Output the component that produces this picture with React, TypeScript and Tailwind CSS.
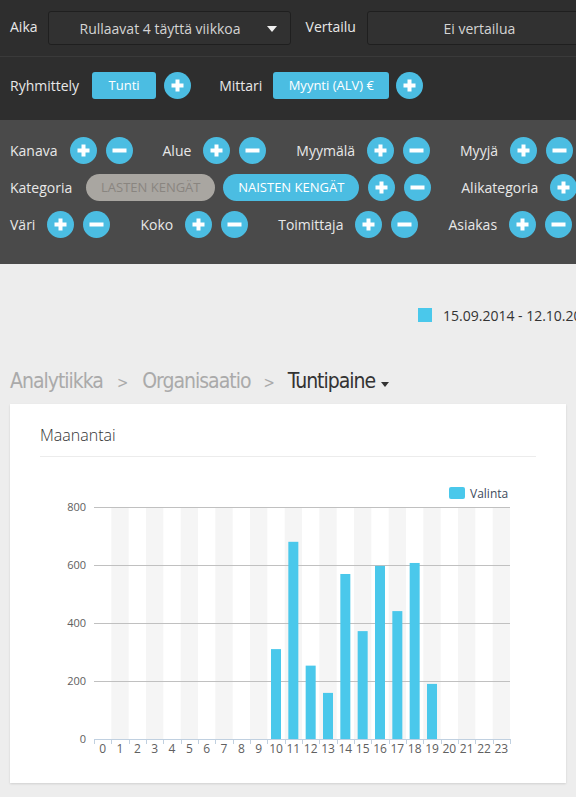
import React from 'react';

const BLUE = '#4bbde2';

const VALUES: Record<number, number> = {
  10: 310, 11: 680, 12: 253, 13: 159, 14: 569, 15: 372, 16: 597, 17: 441, 18: 607, 19: 190,
};

function RoundBtn({ kind }: { kind: 'plus' | 'minus' }) {
  return (
    <svg width="27" height="27" viewBox="0 0 27 27" className="shrink-0">
      <circle cx="13.5" cy="13.5" r="13.5" fill={BLUE} />
      {kind === 'plus' ? (
        <>
          <rect x="7.5" y="11.5" width="12" height="4" fill="#fff" />
          <rect x="11.5" y="7.5" width="4" height="12" fill="#fff" />
        </>
      ) : (
        <rect x="6.5" y="11.5" width="14" height="4" fill="#fff" />
      )}
    </svg>
  );
}

function Filter({ label, children }: { label: string; children?: React.ReactNode }) {
  return (
    <div className="flex items-center shrink-0 mr-[30px]">
      <span className="text-[14px] text-[#e8e8e8] mr-[12px]">{label}</span>
      <div className="flex items-center gap-[9px]">
        {children ?? (
          <>
            <RoundBtn kind="plus" />
            <RoundBtn kind="minus" />
          </>
        )}
      </div>
    </div>
  );
}

function Select({ value, caret }: { value: string; caret?: boolean }) {
  return (
    <div className="relative w-[243px] h-[34px] shrink-0 rounded-[3px] border border-[#1f1f1f] bg-[#313131] flex items-center justify-center pr-[18px]">
      <span className="text-[14px] text-[#d4d4d4]">{value}</span>
      {caret && (
        <svg width="10" height="6" viewBox="0 0 10 6" className="absolute right-[13px] top-[14px]">
          <path d="M0 0 L10 0 L5 6 Z" fill="#f0f0f0" />
        </svg>
      )}
    </div>
  );
}

function Chart() {
  const left = 54;
  const right = 470;
  const top = 42;
  const bottom = 274;
  const cw = (right - left) / 24;
  const scale = (bottom - top) / 800;
  const cats = Array.from({ length: 24 }, (_, i) => i);
  return (
    <svg width="496" height="300" viewBox="0 0 496 300" style={{ fontFamily: '"Open Sans", sans-serif' }}>
      {cats.filter((i) => i % 2 === 1).map((i) => (
        <rect key={'b' + i} x={left + i * cw} y={top} width={cw} height={bottom - top} fill="#f5f5f5" />
      ))}
      {[800, 600, 400, 200].map((v) => {
        const y = bottom - v * scale;
        return <line key={v} x1={left} x2={right} y1={y + 0.5} y2={y + 0.5} stroke="#c0c0c0" strokeWidth="1" />;
      })}
      {[800, 600, 400, 200, 0].map((v) => (
        <text key={'l' + v} x="46" y={bottom - v * scale + 4} textAnchor="end" fontSize="11" fill="#606060">
          {v}
        </text>
      ))}
      {cats.map((i) =>
        VALUES[i] ? (
          <rect
            key={'v' + i}
            x={left + i * cw + cw / 2 - 5}
            y={bottom - VALUES[i] * scale}
            width="10"
            height={VALUES[i] * scale}
            fill="#4ac8eb"
          />
        ) : null
      )}
      <line x1={left} x2={right} y1={bottom + 0.5} y2={bottom + 0.5} stroke="#c0d0e0" />
      {Array.from({ length: 25 }, (_, i) => (
        <line key={'t' + i} x1={Math.round(left + i * cw) + 0.5} x2={Math.round(left + i * cw) + 0.5} y1={bottom} y2={bottom + 5} stroke="#c0d0e0" />
      ))}
      {cats.map((i) => (
        <text key={'x' + i} x={left + i * cw + cw / 2} y="288" textAnchor="middle" fontSize="12" fill="#606060">
          {i}
        </text>
      ))}
      <rect x="409" y="22" width="16" height="12" rx="2" fill="#4ac8eb" />
      <text x="430" y="33" fontSize="12" fill="#3e4a5c">Valinta</text>
    </svg>
  );
}

export default function App() {
  return (
    <div className="w-[576px] min-h-[797px] bg-[#ededed] overflow-hidden" style={{ fontFamily: '"Open Sans", sans-serif' }}>
      <div className="bg-[#2e2e2e]">
        <div className="flex items-center h-[57px] pl-[10px] border-b border-[#3a3a3a]">
          <span className="text-[14px] text-[#e8e8e8] mr-[10px] -mt-[4px]">Aika</span>
          <Select value="Rullaavat 4 täyttä viikkoa" caret />
          <span className="text-[14px] text-[#e8e8e8] ml-[15px] mr-[11px] -mt-[4px]">Vertailu</span>
          <Select value="Ei vertailua" />
        </div>
        <div className="flex items-center h-[63px] pl-[10px] pb-[6px]">
          <span className="text-[14px] text-[#e8e8e8] mr-[13px]">Ryhmittely</span>
          <div className="w-[64px] h-[27px] rounded-[3px] bg-[#4bbde2] flex items-center justify-center text-[13px] text-white">Tunti</div>
          <div className="ml-[8px]"><RoundBtn kind="plus" /></div>
          <span className="text-[14px] text-[#e8e8e8] ml-[28px] mr-[11px]">Mittari</span>
          <div className="w-[116px] h-[27px] rounded-[3px] bg-[#4bbde2] flex items-center justify-center text-[13px] text-white">Myynti (ALV) €</div>
          <div className="ml-[7px]"><RoundBtn kind="plus" /></div>
        </div>
      </div>

      <div className="bg-[#4a4a4a] pt-[17px] pb-[26px] pl-[10px] flex flex-col gap-[10px] overflow-hidden whitespace-nowrap">
        <div className="flex items-center h-[27px]">
          <Filter label="Kanava" />
          <Filter label="Alue" />
          <Filter label="Myymälä" />
          <Filter label="Myyjä" />
        </div>
        <div className="flex items-center h-[27px]">
          <Filter label="Kategoria">
            <div className="w-[129px] h-[27px] rounded-full bg-[#a9a6a1] flex items-center justify-center text-[13px] text-[#898580] ml-[2px]">LASTEN KENGÄT</div>
            <div className="w-[136px] h-[27px] rounded-full bg-[#4bbde2] flex items-center justify-center text-[13px] text-white -ml-[1px]">NAISTEN KENGÄT</div>
            <RoundBtn kind="plus" />
            <RoundBtn kind="minus" />
          </Filter>
          <Filter label="Alikategoria" />
        </div>
        <div className="flex items-center h-[27px]">
          <Filter label="Väri" />
          <Filter label="Koko" />
          <Filter label="Toimittaja" />
          <Filter label="Asiakas" />
        </div>
      </div>

      <div className="pt-[44px] whitespace-nowrap overflow-hidden">
        <div className="flex items-center ml-[418px] h-[14px]">
          <span className="w-[14px] h-[14px] bg-[#4ac8eb] shrink-0" />
          <span className="ml-[11px] text-[14px] text-[#333]">15.09.2014 - 12.10.2014</span>
        </div>
      </div>

      <div className="flex items-baseline pl-[10px] mt-[44px] h-[32px]" style={{ fontFamily: '"DejaVu Sans Condensed", "DejaVu Sans", sans-serif', fontStretch: 'condensed' }}>
        <span className="text-[21px] text-[#aaaaaa] tracking-[-1px]">Analytiikka</span>
        <span className="text-[15px] text-[#aaaaaa] mx-[14px]">&gt;</span>
        <span className="text-[21px] text-[#aaaaaa] tracking-[-1px]">Organisaatio</span>
        <span className="text-[15px] text-[#aaaaaa] mx-[13px]">&gt;</span>
        <span className="text-[21px] text-[#333] tracking-[-1px]">Tuntipaine</span>
        <svg width="8" height="5" viewBox="0 0 8 5" className="ml-[6px] self-center mt-[4px]">
          <path d="M0 0 L8 0 L4 5 Z" fill="#333" />
        </svg>
      </div>

      <div className="mx-[10px] mt-[6px] bg-white shadow-[0_1px_2px_rgba(0,0,0,0.12)] px-[30px] pt-[19px] pb-[18px]">
        <div className="text-[16px] font-light text-[#333] pb-[9px] border-b border-[#ececec]">Maanantai</div>
        <div className="mt-[8px]">
          <Chart />
        </div>
      </div>
    </div>
  );
}
